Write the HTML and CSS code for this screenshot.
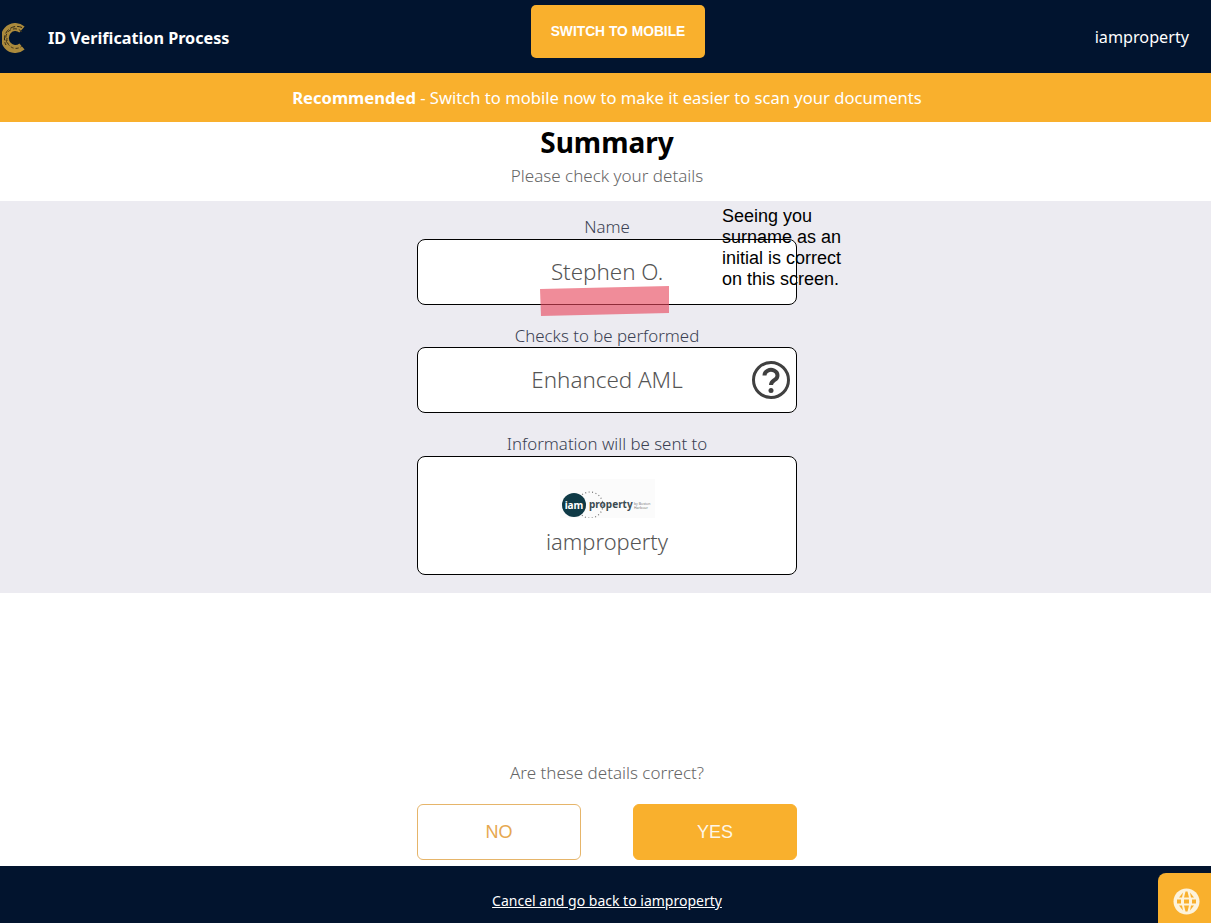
FILE: index.html
```html
<!DOCTYPE html>
<html lang="en">
<head>
<meta charset="utf-8">
<title>ID Verification Process</title>
<link rel="stylesheet" href="styles.css">
</head>
<body>
<header class="topbar">
  <div class="brand">
    <svg class="brand-logo" width="25" height="30" viewBox="0 0 25 30" aria-hidden="true">
      <path d="M20 6.500A10.500 11 0 1 0 20 23.500" fill="none" stroke="#ab8a3c" stroke-width="8"/>
      <path d="M20 4.500A12.500 12.500 0 0 0 4 22" fill="none" stroke="#2a2416" stroke-width="1" stroke-dasharray="5 2"/>
      <path d="M20 9A8.500 8.500 0 0 0 6 21" fill="none" stroke="#3a3018" stroke-width="1" stroke-dasharray="4 2"/>
      <path d="M5 15A9 9 0 0 0 20 23" fill="none" stroke="#3a3018" stroke-width="1" stroke-dasharray="3 2"/>
    </svg>
    <span class="brand-title">ID Verification Process</span>
  </div>
  <button class="switch-btn">SWITCH TO MOBILE</button>
  <div class="account">iamproperty</div>
</header>
<div class="banner"><strong>Recommended</strong> - Switch to mobile now to make it easier to scan your documents</div>
<main class="content">
  <section class="intro">
    <h1 class="intro-title">Summary</h1>
    <p class="intro-sub">Please check your details</p>
  </section>
  <section class="details">
    <div class="field">
      <div class="field-label">Name</div>
      <div class="field-box">Stephen O.</div>
    </div>
    <div class="field">
      <div class="field-label">Checks to be performed</div>
      <div class="field-box field-box-help">Enhanced AML
        <svg class="help-icon" width="40" height="40" viewBox="0 0 40 40" aria-hidden="true">
          <circle cx="20" cy="20" r="17.500" fill="none" stroke="#404040" stroke-width="3"/>
          <path d="M13.500 15.500a6.500 5.500 0 1 1 10 4.500c-2 1.500-3.500 2.500-3.500 5" fill="none" stroke="#404040" stroke-width="4"/>
          <circle cx="20" cy="30.500" r="2.500" fill="#404040"/>
        </svg>
      </div>
    </div>
    <div class="field">
      <div class="field-label">Information will be sent to</div>
      <div class="field-box field-box-org">
        <svg class="org-logo" width="95" height="39" viewBox="0 0 95 39" role="img" aria-label="iam property">
          <rect width="95" height="39" fill="#fbfbfb"/>
          <circle cx="30" cy="26" r="13" fill="none" stroke="#777" stroke-width="1.200" stroke-dasharray="1 2.500"/>
          <circle cx="14" cy="26" r="12" fill="#0f3a46"/>
          <text x="14" y="29.500" class="org-iam" text-anchor="middle">iam</text>
          <text x="29" y="29" class="org-name">property</text>
          <text x="74" y="25.500" class="org-small">by Boston</text>
          <text x="74" y="29.500" class="org-small">Harbour</text>
        </svg>
        <div class="org-name-label">iamproperty</div>
      </div>
    </div>
  </section>
  <section class="confirm">
    <p class="confirm-text">Are these details correct?</p>
    <div class="confirm-actions">
      <button class="choice choice-no">NO</button>
      <button class="choice choice-yes">YES</button>
    </div>
  </section>
</main>
<footer class="footer"><a class="cancel-link" href="#">Cancel and go back to iamproperty</a></footer>
<div class="lang-tab">
  <svg width="27" height="27" viewBox="0 0 27 27" aria-hidden="true">
    <circle cx="13.500" cy="13.500" r="13" fill="#fdf3dc"/>
    <g fill="#f9b02d">
      <rect x="4" y="11.500" width="4" height="4"/>
      <rect x="11" y="11.500" width="5" height="4"/>
      <rect x="19" y="11.500" width="4" height="4"/>
      <path d="M11 9.500h5l-1.500-6h-2zM6 9.500h3l1-5zM18 9.500h3l-4-5zM11 17.500h5l-1.500 6h-2zM6 17.500h3l1 5zM18 17.500h3l-4 5z"/>
    </g>
  </svg>
</div>
<div class="highlight-mark"></div>
<div class="annotation">Seeing you<br>surname as an<br>initial is correct<br>on this screen.</div>
</body>
</html>
```
FILE: styles.css
```css
* { box-sizing: border-box; }
html, body { height: 100%; }
body {
  margin: 0;
  height: 100vh;
  display: flex;
  flex-direction: column;
  font-family: "Noto Sans", "Open Sans", sans-serif;
  color: #666;
  background: #fff;
  overflow: hidden;
  position: relative;
}
.topbar {
  height: 73px;
  flex: none;
  background: #01142f;
  display: grid;
  grid-template-columns: 529px 174px 1fr;
  padding: 5px 22px 15px 2px;
}
.brand { display: flex; align-items: center; gap: 21px; padding-top: 13px; }
.brand-logo { flex: none; }
.brand-title { color: #fff; font-size: 16.200px; font-weight: 700; line-height: 22px; margin-bottom: 1px; }
.switch-btn {
  border: 0;
  border-radius: 5px;
  background: #f9b02d;
  color: #fff;
  font: 700 13.800px "Liberation Sans", Arial, sans-serif;
}
.account {
  justify-self: end;
  align-self: center;
  padding-top: 11px;
  color: #fff;
  font-size: 16.200px;
}
.banner {
  height: 49px;
  flex: none;
  background: #f9b02d;
  color: #fff;
  font-size: 16.600px;
  display: flex;
  align-items: center;
  justify-content: center;
  padding-left: 3px;
  white-space: pre-wrap;
}
.content { flex: 1; display: flex; flex-direction: column; min-height: 0; }
.intro { height: 79px; flex: none; text-align: center; padding-left: 3px; }
.intro-title { margin: 0; padding-top: 1px; font-size: 28px; line-height: 38px; font-weight: 700; color: #000; }
.intro-sub { margin: 0; padding-top: 3px; font-size: 17px; font-weight: 300; line-height: 24px; color: #666; }
.details {
  background: #ecebf1;
  display: flex;
  flex-direction: column;
  align-items: center;
  gap: 20px;
  padding: 15.250px 0 18px 3px;
  flex: none;
}
.field { width: 380px; }
.field-label { height: 22.500px; line-height: 22px; text-align: center; font-size: 16.850px; font-weight: 300; color: #3a3f52; }
.field-box {
  position: relative;
  height: 66px;
  background: #fff;
  border: 1px solid #000;
  border-radius: 8px;
  display: flex;
  align-items: center;
  justify-content: center;
  padding-bottom: 1px;
  font-size: 22.400px;
  font-weight: 300;
  color: #555;
}
.help-icon { position: absolute; right: 5px; top: 12px; }
.field-box-org { height: 119px; flex-direction: column; justify-content: flex-start; padding: 22px 0 0; }
.org-logo { display: block; }
.org-iam { font: 700 10px "Noto Sans", sans-serif; fill: #fff; }
.org-name { font: 700 10px "Noto Sans", sans-serif; fill: #3a4a50; }
.org-small { font: 400 3.500px "Noto Sans", sans-serif; fill: #777; }
.org-name-label { font-size: 21.900px; line-height: 30px; margin-top: 9px; }
.confirm { margin-top: auto; padding: 0 0 6px 3px; display: flex; flex-direction: column; align-items: center; }
.confirm-text { margin: 0 0 19px; font-size: 17px; font-weight: 300; line-height: 24px; color: #666; }
.confirm-actions { display: flex; gap: 52px; }
.choice {
  width: 164px;
  height: 56px;
  border-radius: 6px;
  font: 400 18px "Liberation Sans", Arial, sans-serif;
}
.choice-no { background: #fff; border: 1px solid #e6b56a; color: #e6a850; }
.choice-yes { background: #f9b02d; border: 1px solid #f9b02d; color: #fdf6e8; }
.footer {
  height: 57px;
  flex: none;
  background: #02142e;
  display: flex;
  align-items: center;
  justify-content: center;
  padding: 12px 0 0 3px;
}
.cancel-link { color: #fff; font-size: 14px; }
.lang-tab {
  position: absolute;
  left: 1158px;
  top: 873px;
  width: 53px;
  height: 50px;
  background: #f9b02d;
  border-top-left-radius: 8px;
  display: flex;
  align-items: center;
  justify-content: center;
  padding: 8px 0 2px 3px;
}
.highlight-mark {
  position: absolute;
  left: 540px;
  top: 286px;
  width: 130px;
  height: 30px;
  background: rgba(230, 70, 90, 0.62);
  clip-path: polygon(0 3px, 129px 0, 129px 27px, 1px 30px);
}
.annotation {
  position: absolute;
  left: 722px;
  top: 206px;
  font: 18px/21px "Liberation Sans", Arial, sans-serif;
  color: #000;
  white-space: nowrap;
}
```
